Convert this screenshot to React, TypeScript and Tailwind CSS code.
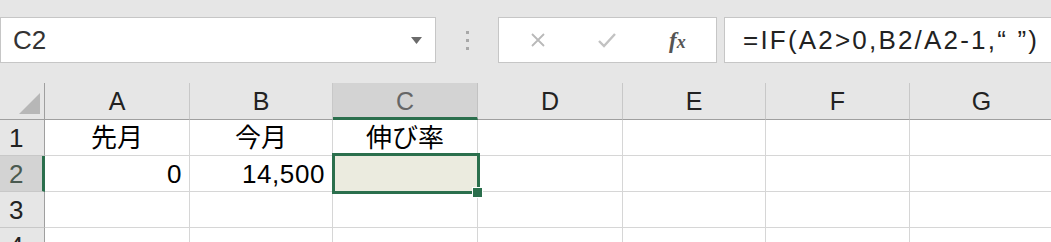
import { Fragment } from 'react'
import type { ReactNode } from 'react'

const COLUMNS = ['A', 'B', 'C', 'D', 'E', 'F', 'G']
const SELECTED_COL = 'C'
const SELECTED_ROW = 2

type Cell = { text: string; align?: 'left' | 'center' | 'right' }

const ROWS: { n: number; cells: Record<string, Cell> }[] = [
  {
    n: 1,
    cells: {
      A: { text: '先月', align: 'center' },
      B: { text: '今月', align: 'center' },
      C: { text: '伸び率', align: 'center' }
    }
  },
  {
    n: 2,
    cells: {
      A: { text: '0', align: 'right' },
      B: { text: '14,500', align: 'right' }
    }
  },
  { n: 3, cells: {} },
  { n: 4, cells: {} }
]

function NameBox(): JSX.Element {
  return (
    <div className="flex h-[46px] w-[436px] shrink-0 items-center justify-between border border-[#c6c6c6] bg-white pl-[12px] pr-[13px]">
      <span className="text-[26px] leading-none text-[#333]">C2</span>
      <svg width="11" height="7" viewBox="0 0 11 7">
        <polygon points="0,0 11,0 5.5,7" fill="#6b6b6b" />
      </svg>
    </div>
  )
}

function FormulaButtons(): JSX.Element {
  return (
    <div className="flex h-[46px] w-[219px] shrink-0 items-center border border-[#c6c6c6] bg-white pl-[31px]">
      {/* cancel */}
      <svg width="16" height="16" viewBox="0 0 16 16">
        <path d="M2 2 L14 14 M14 2 L2 14" stroke="#b9b9b9" strokeWidth="1.8" fill="none" />
      </svg>
      {/* enter */}
      <svg className="ml-[51px]" width="20" height="16" viewBox="0 0 20 16">
        <path d="M2 9 L7 14 L18 2" stroke="#c2c2c2" strokeWidth="2.4" fill="none" />
      </svg>
      <span className="ml-[52px] font-['Liberation_Serif',serif] text-[23px] font-bold italic leading-none text-[#555]">
        f<span className="text-[18px]">x</span>
      </span>
    </div>
  )
}

function HeaderCell({ children, selected }: { children?: ReactNode; selected?: boolean }): JSX.Element {
  return (
    <div
      className={[
        'flex items-center justify-center border-r text-[25px] leading-none',
        selected
          ? 'border-r-[#c2c2c2] border-b-[3px] border-b-[#2b6f4d] bg-[#d3d3d3] pt-[2px] text-[#666]'
          : 'border-r-[#c8c8c8] border-b border-b-[#9f9f9f] bg-[#e6e6e6] text-[#222]'
      ].join(' ')}
    >
      {children}
    </div>
  )
}

function RowHeader({ n }: { n: number }): JSX.Element {
  const selected = n === SELECTED_ROW
  return (
    <div
      className={[
        'flex items-center border-b border-b-[#c8c8c8] pl-[9px] text-[26px] leading-none',
        selected
          ? 'border-r-[3px] border-r-[#2b6f4d] bg-[#d3d3d3] text-[#4a5a50]'
          : 'border-r border-r-[#9f9f9f] bg-[#e6e6e6] text-[#222]'
      ].join(' ')}
    >
      {n}
    </div>
  )
}

export default function App(): JSX.Element {
  return (
    <div className="h-[242px] w-[1051px] overflow-hidden bg-[#e6e6e6] font-['Liberation_Sans','Noto_Sans_CJK_JP',sans-serif]">
      {/* Formula bar */}
      <div className="flex h-[83px] items-start pt-[17px]">
        <NameBox />
        <div className="flex w-[62px] shrink-0 flex-col items-center gap-[5px] pt-[14px]">
          <span className="h-[3px] w-[3px] bg-[#a8a8a8]" />
          <span className="h-[3px] w-[3px] bg-[#a8a8a8]" />
          <span className="h-[3px] w-[3px] bg-[#a8a8a8]" />
        </div>
        <FormulaButtons />
        <div className="ml-[7px] flex h-[46px] w-[340px] shrink-0 items-center border border-[#c6c6c6] bg-white pl-[18px]">
          <span className="whitespace-nowrap text-[26px] leading-none tracking-[2.2px] text-[#222]">
            =IF(A2&gt;0,B2/A2-1,“ ”)
          </span>
        </div>
      </div>

      {/* Sheet grid */}
      <div className="grid grid-cols-[45px_145px_143px_145px_145px_143px_144px_144px] grid-rows-[37px_36px_36px_36px_36px] bg-white">
        <div className="relative border-r border-b border-r-[#9f9f9f] border-b-[#9f9f9f] bg-[#e6e6e6]">
          <svg className="absolute left-[19px] top-[10px]" width="21" height="21" viewBox="0 0 21 21">
            <polygon points="21,0 21,21 0,21" fill="#b7b7b7" />
          </svg>
        </div>
        {COLUMNS.map((c) => (
          <HeaderCell key={c} selected={c === SELECTED_COL}>
            {c}
          </HeaderCell>
        ))}

        {ROWS.map((row) => (
          <Fragment key={row.n}>
            <RowHeader n={row.n} />
            {COLUMNS.map((c) => {
              const cell = row.cells[c]
              const active = row.n === SELECTED_ROW && c === SELECTED_COL
              return (
                <div
                  key={`${c}${row.n}`}
                  className={[
                    'relative flex items-center border-r border-b border-[#d6d6d6] text-[26px] leading-none text-black',
                    cell?.align === 'right' ? 'justify-end pr-[7px] tracking-[0.6px]' : 'justify-center',
                    active ? 'z-10 bg-[#ebebdf]' : 'bg-white'
                  ].join(' ')}
                >
                  {cell?.text}
                  {active && (
                    <div className="absolute -top-[3px] -left-px h-[41px] w-[148px] border-[3px] border-[#2b6f4d]">
                      <div className="absolute -right-[6px] -bottom-[7px] h-[11px] w-[11px] border border-white bg-[#2b6f4d]" />
                    </div>
                  )}
                </div>
              )
            })}
          </Fragment>
        ))}
      </div>
    </div>
  )
}
